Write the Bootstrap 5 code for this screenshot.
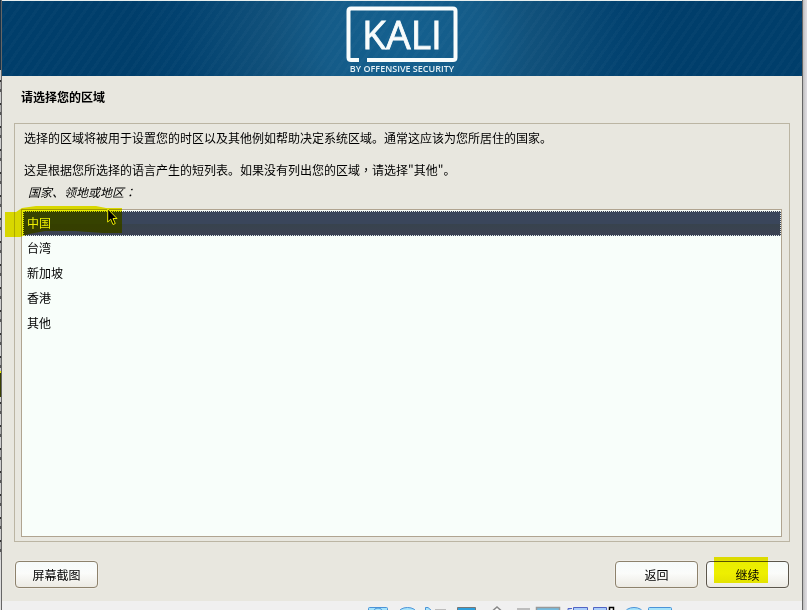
<!DOCTYPE html>
<html lang="zh-CN">
<head>
<meta charset="utf-8">
<meta name="viewport" content="width=device-width, initial-scale=1">
<title>请选择您的区域</title>
<link href="https://cdn.jsdelivr.net/npm/bootstrap@5.3.0/dist/css/bootstrap.min.css" rel="stylesheet">
<style>
  body { font-family: "Noto Sans CJK SC", sans-serif; font-size: 12px; line-height: 16px; color: #000; background: #e8e7df; }
  .edge-left { width: 2px; flex: none; border-right: 1px solid #666;
    background: linear-gradient(#17334a 0 70px, transparent 70px 371px, #eeee00 371px 373px, #3a4000 373px 397px, transparent 397px 560px, #ddd 560px),
      repeating-linear-gradient(#ccc 0 11px, #333 11px 13px, #aaa 13px 20px, #555 20px 23px); }
  .edge-right { width: 5px; flex: none; border-left: 1px solid #666; background: linear-gradient(90deg, #bbb, #dcdade 3px); }
  .banner { height: 76px; border-top: 1px solid #e8efef; overflow: hidden;
    background: repeating-linear-gradient(125deg, rgba(255,255,255,.02) 0 3px, transparent 3px 8px),
      radial-gradient(circle at 50% 50%, #14608f 0, #145b88 80px, #11517b 130px, #024270 220px, #003e6b 270px); }
  .heading { font-size: 12px; line-height: 16px; margin: 13px 0 0 19px; }
  .panel { margin: 18px 12px 0; padding: 6px 7px 4px 6px; border: 1px solid #bbb5a3; }
  .lead-in { margin: 0 3px 16px; }
  .field-label { margin: -10px 7px 9px; font-style: italic; }
  .mid { font-family: "Noto Sans CJK TC", sans-serif; }
  .choices { border: 1px solid #b0a490; background: #f8fefa; padding: 1px 0 0 1px; border-radius: 0; }
  .choices .list-group-item { padding: 4px 4px 5px; line-height: 16px; border: 0; color: #000; background: transparent; }
  .choices .list-group-item.active { margin: 0; padding: 3px 3px 4px; border: 1px dotted #dfe4e4; color: #fff; background: linear-gradient(#3a465b 50%, #38434d 51%, #3b4253); }
  .marker { mix-blend-mode: multiply; pointer-events: none; }
  .row-marker { left: -17px; top: -5px; }
  .pointer { left: 85px; top: -2px; }
  .actions { padding: 19px 13px 13px; }
  .wbtn { width: 83px; height: 27px; padding: 0; font-size: 12px; line-height: 16px; color: #000; border: 1px solid #8d826c; border-radius: 4px; background: linear-gradient(#f6fbfb, #fbfcfa 45%, #eceae3); box-shadow: 0 0 0 1px #efede7; }
  .wbtn.default { border-color: #5b564b; }
  .button-marker { left: 7px; top: -5px; width: 54px; height: 26px; background: #f2f200; }
  .statusbar { height: 9px; background: #f0f0f0; overflow: hidden; }
  .statusbar svg { margin-left: 358px; }
</style>
<script src="https://cdn.jsdelivr.net/npm/bootstrap@5.3.0/dist/js/bootstrap.bundle.min.js"></script>
</head>
<body>
<div class="d-flex min-vh-100">
  <div class="edge-left"></div>
  <main class="d-flex flex-column flex-grow-1">
    <header class="banner d-flex justify-content-center">
      <svg width="116" height="75" viewBox="0 0 116 75" role="img" aria-label="KALI by Offensive Security">
        <path d="M15 59H7Q4.500 59 4.500 56.500V10Q4.500 7.500 7 7.500H109Q111.500 7.500 111.500 10V56.500Q111.500 59 109 59H23" fill="none" stroke="#f8fcfc" stroke-width="4"/>
        <text x="58" y="48" text-anchor="middle" font-family="Open Sans, sans-serif" font-size="39" font-weight="500" fill="#f8fcfc" stroke="#f8fcfc" stroke-width=".8">KALI</text>
        <text x="58" y="71" text-anchor="middle" font-family="Open Sans, sans-serif" font-size="9" font-weight="600" fill="#e4f0f5">BY OFFENSIVE SECURITY</text>
      </svg>
    </header>
    <h1 class="heading fw-bold">请选择您的区域</h1>
    <section class="panel d-flex flex-column flex-grow-1">
      <p class="lead-in">选择的区域将被用于设置您的时区以及其他例如帮助决定系统区域。通常这应该为您所居住的国家。</p>
      <p class="lead-in">这是根据您所选择的语言产生的短列表。如果没有列出您的区域<span class="mid" lang="zh-TW">，</span>请选择"其他"。</p>
      <div class="field-label" id="region-label">国家、领地或地区<span class="mid" lang="zh-TW">：</span></div>
      <div class="choices list-group flex-grow-1 position-relative" role="listbox" aria-labelledby="region-label">
        <button type="button" class="list-group-item list-group-item-action active" role="option" aria-selected="true">中国</button>
        <button type="button" class="list-group-item list-group-item-action" role="option" aria-selected="false">台湾</button>
        <button type="button" class="list-group-item list-group-item-action" role="option" aria-selected="false">新加坡</button>
        <button type="button" class="list-group-item list-group-item-action" role="option" aria-selected="false">香港</button>
        <button type="button" class="list-group-item list-group-item-action" role="option" aria-selected="false">其他</button>
        <svg class="pointer position-absolute z-2" width="12" height="18" viewBox="0 0 12 18" aria-hidden="true"><path d="M.7.800V14L3.700 11.200 6 16.500 8.300 15.500 6 10.500H10Z" fill="#000" stroke="#fff" stroke-width="1"/></svg>
        <svg class="marker row-marker position-absolute z-3" width="118" height="34" viewBox="0 0 118 34" aria-hidden="true"><path d="M0 7H11L17 3 31 1H91L101 3H117V28H98L70 26H40L24 29 15 32H0Z" fill="#eeee00"/></svg>
      </div>
    </section>
    <div class="actions d-flex">
      <button type="button" class="btn wbtn">屏幕截图</button>
      <button type="button" class="btn wbtn ms-auto">返回</button>
      <button type="button" class="btn wbtn default position-relative ms-2">继续<span class="marker button-marker position-absolute"></span></button>
    </div>
    <footer class="statusbar d-flex">
      <svg width="320" height="9" viewBox="0 0 320 9" aria-hidden="true">
        <g fill="#a6e3fb" stroke="#4b93d8">
          <rect x="8.500" y="6.500" width="19" height="8" rx="1"/><circle cx="18" cy="12" r="5"/>
          <ellipse cx="47.500" cy="12" rx="9" ry="5.500"/>
          <path d="M65.500 6.500H68L72 10H65.500Z"/>
          <rect x="288.500" y="6.500" width="23" height="8" rx="1"/>
          <ellipse cx="274" cy="12" rx="9" ry="5.500"/>
        </g>
        <path d="M75 8H86V10H75ZM157 7H170V10H157Z" fill="#bdbdbd"/>
        <path d="M97.500 10V6.500H115.500V10" fill="#2d9fdc" stroke="#777"/>
        <path d="M132.500 10L137 6 141.500 10" fill="#fff" stroke="#888" stroke-width="1.500"/>
        <path d="M176.500 10V6.500H199.500V10" fill="#75bce0" stroke="#999" stroke-width="1.500"/>
        <path d="M213.500 10V6.500H227.500V10M208 10V7.500H212M233.500 10V6.500H246.500V10" fill="#a9ccfa" stroke="#5264c5"/>
        <path d="M249.500 10V6.500H253.500V10" fill="#fff" stroke="#000" stroke-width="1.500"/>
      </svg>
    </footer>
  </main>
  <div class="edge-right"></div>
</div>
</body>
</html>
